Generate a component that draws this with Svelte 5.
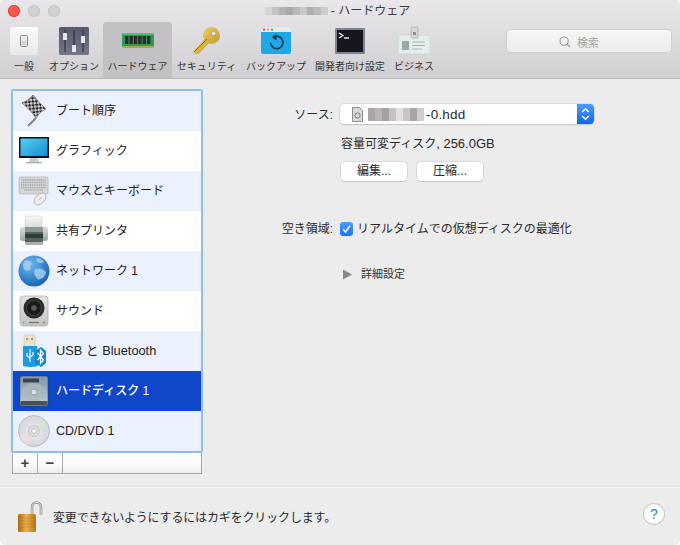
<script>
  // toolbar tabs and device list
  const tabs = [
    { id: "general", label: "一般", w: 42 },
    { id: "options", label: "オプション", w: 58 },
    { id: "hardware", label: "ハードウェア", w: 69, active: true },
    { id: "security", label: "セキュリティ", w: 69 },
    { id: "backup", label: "バックアップ", w: 70 },
    { id: "dev", label: "開発者向け設定", w: 78 },
    { id: "business", label: "ビジネス", w: 50 },
  ];

  const rows = [
    { id: "boot", label: "ブート順序" },
    { id: "display", label: "グラフィック" },
    { id: "keyboard", label: "マウスとキーボード" },
    { id: "printer", label: "共有プリンタ" },
    { id: "network", label: "ネットワーク 1" },
    { id: "sound", label: "サウンド" },
    { id: "usb", label: "USB と Bluetooth" },
    { id: "hdd", label: "ハードディスク 1", selected: true },
    { id: "cd", label: "CD/DVD 1" },
  ];

  const titleBlur = ["#d6d4d6", "#c4c2c4", "#b5b3b5", "#a9a7a9", "#b9b7b9", "#c9c7c9", "#b1afb1", "#bdbbbd", "#cdcbcd"];
  const fileBlur = ["#aaa6aa", "#b8b4b8", "#a4a0a4", "#c4c0c4", "#e2e0e2", "#c8c4c8", "#a8a4a8", "#d0ccd0"];
</script>

{#snippet toolIcon(id)}
  {#if id === "general"}
    <svg width="30" height="30" viewBox="0 0 30 30">
      <rect x="1" y="1" width="28" height="28" rx="1.5" fill="url(#gSwitch)" />
      <rect x="11.5" y="9.5" width="7" height="11" rx="1" fill="#ececec" stroke="#8a8c8f" stroke-width="1" />
      <rect x="12.5" y="15" width="5" height="4.5" fill="#d2d2d2" />
    </svg>
  {:else if id === "options"}
    <svg width="30" height="30" viewBox="0 0 30 30">
      <rect x="0" y="1" width="30" height="28" rx="1.5" fill="url(#gSlate)" />
      <path d="M6 4v22M15 4v22M24 4v22" stroke="#2e3240" stroke-width="1.2" />
      <rect x="4" y="7" width="4" height="7" rx=".6" fill="#e6e6e6" />
      <rect x="13" y="19" width="4" height="7" rx=".6" fill="#e6e6e6" />
      <rect x="22" y="10" width="4" height="7" rx=".6" fill="#e6e6e6" />
    </svg>
  {:else if id === "hardware"}
    <svg width="34" height="30" viewBox="0 0 34 30">
      <rect x="1" y="7" width="32" height="14" fill="#2f9a55" />
      <rect x="1" y="7" width="32" height="2" fill="#4fc078" />
      <path d="M4 10h3.4v8H4zM8.4 10h3.4v8H8.4zM12.8 10h3.4v8h-3.4zM17.2 10h3.4v8h-3.4zM21.6 10h3.4v8h-3.4zM26 10h3.4v8H26z" fill="#2b2b2b" />
      <rect x="2" y="20" width="30" height="2" fill="#b5a244" />
    </svg>
  {:else if id === "security"}
    <svg width="30" height="30" viewBox="0 0 30 30">
      <path d="M1 26 L3 28 L7 27.5 L19 15 L14 11 Z" fill="url(#gKey)" />
      <circle cx="19.5" cy="9.5" r="8.5" fill="url(#gKey)" />
      <circle cx="21.5" cy="7.5" r="2.4" fill="#e7e5e7" stroke="#a98a22" stroke-width=".6" />
      <path d="M2 26 L15 13" stroke="#8c6f18" stroke-width="1" />
    </svg>
  {:else if id === "backup"}
    <svg width="30" height="30" viewBox="0 0 30 30">
      <rect x="0" y="1" width="30" height="27" rx="2" fill="#1ea8e6" />
      <path d="M0 6V3a2 2 0 0 1 2-2h26a2 2 0 0 1 2 2v3z" fill="#e6eaee" />
      <circle cx="3" cy="3.6" r="1.2" fill="#e8483f" />
      <circle cx="7" cy="3.6" r="1.2" fill="#e8a33a" />
      <circle cx="11" cy="3.6" r="1.2" fill="#3fb65a" />
      <path d="M12 11.5 A6.2 6.2 0 1 1 9.6 17" fill="none" stroke="#14384f" stroke-width="1.6" />
      <path d="M15.5 8 L11 11.5 L15.5 14.5 Z" fill="#14384f" />
    </svg>
  {:else if id === "dev"}
    <svg width="30" height="30" viewBox="0 0 30 30">
      <rect x="0" y="2" width="30" height="26" rx="1" fill="#7d8298" />
      <rect x="2" y="4" width="26" height="22" fill="#16171b" />
      <path d="M4 7 L8 9.5 L4 12" fill="none" stroke="#fff" stroke-width="1.3" />
      <path d="M9 12h5" stroke="#fff" stroke-width="1.3" />
    </svg>
  {:else if id === "business"}
    <svg width="32" height="30" viewBox="0 0 32 30">
      <rect x="0" y="9" width="32" height="19" rx="1.5" fill="#e3eeec" stroke="#ccd6d4" />
      <rect x="13" y="1" width="7" height="11" rx="1" fill="#d6d6d6" stroke="#a9a9a9" stroke-width=".7" />
      <rect x="15" y="6" width="3" height="3" fill="#8d8d8d" />
      <rect x="4" y="15" width="7" height="9" fill="#9aa7a8" />
      <path d="M14 16h13M14 19.5h13M14 23h10" stroke="#a4b3b5" stroke-width="1.2" />
    </svg>
  {/if}
{/snippet}

{#snippet rowIcon(id)}
  {#if id === "boot"}
    <svg width="32" height="34" viewBox="0 0 32 34">
      <path d="M18 24 L10 32" stroke="#858585" stroke-width="2.2" />
      <path d="M4 9 Q10 7 15 1 Q20 8 28 15 Q22 17 18 24 Q12 15 4 9Z" fill="url(#pCheck)" stroke="#444" stroke-width=".5" />
    </svg>
  {:else if id === "display"}
    <svg width="32" height="30" viewBox="0 0 32 30">
      <rect x="1" y="1" width="30" height="21" fill="#101418" />
      <rect x="2.5" y="2.5" width="27" height="17.5" fill="url(#gScreen)" />
      <path d="M12 22h8l1 4H11z" fill="#c4d0d4" />
      <rect x="8" y="26" width="16" height="1.4" fill="#a9b0b2" />
    </svg>
  {:else if id === "keyboard"}
    <svg width="32" height="32" viewBox="0 0 32 32">
      <rect x="1" y="2" width="29" height="17" rx="1.5" fill="#d7d7d7" stroke="#a9a9a9" stroke-width=".6" />
      <path d="M3 5h25M3 7.5h25M3 10h25M3 12.5h25M6 15h19" stroke="#a8a8a8" stroke-width="1.4" stroke-dasharray="1.2 .6" />
      <ellipse cx="22" cy="24" rx="4.6" ry="7" transform="rotate(45 22 24)" fill="#eeeeee" stroke="#a4a4a4" stroke-width=".7" />
      <path d="M24 22 L21 25" stroke="#bbb" stroke-width="1" />
    </svg>
  {:else if id === "printer"}
    <svg width="32" height="32" viewBox="0 0 32 32">
      <rect x="7" y="1" width="17" height="13" rx="1.5" fill="url(#gPaper)" stroke="#c8c8c8" stroke-width=".5" />
      <rect x="2" y="12" width="28" height="14" rx="2.5" fill="url(#gPrinter)" />
      <rect x="7" y="12" width="18" height="15" fill="#55615f" />
      <rect x="7" y="12" width="18" height="5" fill="#8e9997" />
      <rect x="7" y="19" width="18" height="4" fill="#333b3a" />
      <rect x="7" y="27" width="18" height="3" rx="1" fill="#aab0b0" />
      <rect x="26" y="22" width="2" height="2" fill="#5fcf6b" />
    </svg>
  {:else if id === "network"}
    <svg width="32" height="32" viewBox="0 0 32 32">
      <circle cx="16" cy="16" r="15.5" fill="url(#gGlobe)" />
      <path d="M6 6 Q12 4 14 8 Q11 12 13 14 Q9 18 6 14 Q4 10 6 6Z M17 14 Q24 12 28 17 Q27 23 22 24 Q20 26 18 22 Q15 18 17 14Z M18 3 Q23 3 26 7 Q22 9 19 7Z" fill="#a9d3f0" opacity=".8" />
    </svg>
  {:else if id === "sound"}
    <svg width="30" height="32" viewBox="0 0 30 32">
      <rect x="1" y="1" width="28" height="30" rx="3.5" fill="url(#gBox)" stroke="#a8a8a8" stroke-width=".7" />
      <circle cx="15" cy="13" r="10.5" fill="#2a2a2a" />
      <circle cx="15" cy="13" r="7.5" fill="#1a1a1a" stroke="#4b4b4b" stroke-width=".8" />
      <circle cx="15" cy="13" r="2.8" fill="#5a5a5a" />
      <path d="M10 27.5h10" stroke="#777" stroke-width="1.3" />
      <circle cx="4.5" cy="27.5" r=".9" fill="#46c060" />
      <circle cx="25" cy="27.5" r="1.2" fill="#999" />
    </svg>
  {:else if id === "usb"}
    <svg width="26" height="34" viewBox="0 0 26 34">
      <rect x="3" y="1" width="11" height="12" rx="1" fill="#ece2c6" stroke="#c7bd9f" stroke-width=".5" />
      <rect x="5" y="4" width="2" height="2" fill="#a39a80" />
      <rect x="10" y="4" width="2" height="2" fill="#a39a80" />
      <path d="M2 12h14l1 20q-7 2-15 0z" fill="#1e9bde" />
      <path d="M9 15v13M6 19v3l3 2M12 18v3l-3 2" fill="none" stroke="#e4f4fc" stroke-width="1.2" />
      <path d="M20 13l5 4v12l-5 4-6-4V17z" fill="#0d85d0" />
      <path d="M16.5 19 L22.5 26 L19.5 29.5 V16 L22.5 19.5 L16.5 26" fill="none" stroke="#fff" stroke-width="1.3" />
    </svg>
  {:else if id === "hdd"}
    <svg width="30" height="32" viewBox="0 0 30 32">
      <rect x="1" y="1" width="28" height="30" rx="2" fill="url(#gHdd)" stroke="#2c3a4a" stroke-width=".5" />
      <rect x="4" y="3.5" width="16" height="4" rx=".5" fill="#3a4450" />
      <ellipse cx="15" cy="17" rx="12" ry="9" fill="#a9bac2" opacity=".75" />
      <circle cx="15" cy="17" r="3" fill="#d8e2e6" stroke="#75838b" stroke-width=".6" />
      <rect x="1.5" y="26" width="27" height="4.5" fill="#4b4f52" />
    </svg>
  {:else if id === "cd"}
    <svg width="32" height="32" viewBox="0 0 32 32">
      <circle cx="16" cy="16" r="15.5" fill="url(#gCd)" stroke="#a5a5a5" stroke-width=".6" />
      <path d="M16 16 L22 2 Q28 6 30 12Z" fill="#cfe8d4" opacity=".8" />
      <path d="M16 16 L9 30 Q4 27 2 21Z" fill="#f3d9e4" opacity=".8" />
      <circle cx="16" cy="16" r="5.5" fill="#dedede" stroke="#b5b5b5" stroke-width=".6" />
      <circle cx="16" cy="16" r="2.4" fill="#f4f4f4" stroke="#a5a5a5" stroke-width=".6" />
    </svg>
  {/if}
{/snippet}

<svg class="defs" width="0" height="0" aria-hidden="true">
  <defs>
    <linearGradient id="gSwitch" x1="0" y1="0" x2="0" y2="1"><stop offset="0" stop-color="#fafafa" /><stop offset="1" stop-color="#e9e9e9" /></linearGradient>
    <linearGradient id="gSlate" x1="0" y1="0" x2="0" y2="1"><stop offset="0" stop-color="#565b6c" /><stop offset="1" stop-color="#737789" /></linearGradient>
    <linearGradient id="gKey" x1="0" y1="0" x2="1" y2="1"><stop offset="0" stop-color="#ecd262" /><stop offset="1" stop-color="#c09a2a" /></linearGradient>
    <linearGradient id="gScreen" x1="0" y1="0" x2="1" y2="1"><stop offset="0" stop-color="#56cdf3" /><stop offset="1" stop-color="#1590d2" /></linearGradient>
    <linearGradient id="gPaper" x1="0" y1="0" x2="0" y2="1"><stop offset="0" stop-color="#f8f8f8" /><stop offset="1" stop-color="#d6d6d6" /></linearGradient>
    <linearGradient id="gBox" x1="0" y1="0" x2="0" y2="1"><stop offset="0" stop-color="#e4e4e4" /><stop offset="1" stop-color="#c4c4c4" /></linearGradient>
    <linearGradient id="gPrinter" x1="0" y1="0" x2="0" y2="1"><stop offset="0" stop-color="#d8dedd" /><stop offset="1" stop-color="#9ea7a6" /></linearGradient>
    <radialGradient id="gGlobe" cx=".38" cy=".3" r=".75"><stop offset="0" stop-color="#6db9ee" /><stop offset="1" stop-color="#1760b4" /></radialGradient>
    <linearGradient id="gHdd" x1="0" y1="0" x2="0" y2="1"><stop offset="0" stop-color="#7f95a6" /><stop offset="1" stop-color="#c2ced4" /></linearGradient>
    <radialGradient id="gCd" cx=".5" cy=".5" r=".5"><stop offset="0" stop-color="#ededed" /><stop offset="1" stop-color="#d4d6e0" /></radialGradient>
    <pattern id="pCheck" width="5" height="5" patternUnits="userSpaceOnUse" patternTransform="rotate(40)">
      <rect width="5" height="5" fill="#d8d8d8" />
      <rect width="2.5" height="2.5" fill="#262626" />
      <rect x="2.5" y="2.5" width="2.5" height="2.5" fill="#262626" />
    </pattern>
  </defs>
</svg>

<div class="window">
  <header class="head">
    <div class="titlebar">
      <div class="lights">
        <span class="light red"></span>
        <span class="light"></span>
        <span class="light"></span>
      </div>
      <div class="title">
        <span class="blur">
          {#each titleBlur as c}<i style="background:{c}"></i>{/each}
        </span>
        <span>- ハードウェア</span>
      </div>
    </div>
    <div class="toolbar">
      <nav class="tabs">
        {#each tabs as t}
          <div class="tab" class:active={t.active} style="width:{t.w}px">
            <div class="tab-icon">{@render toolIcon(t.id)}</div>
            <span>{t.label}</span>
          </div>
        {/each}
      </nav>
      <div class="search">
        <svg width="12" height="12" viewBox="0 0 14 14">
          <circle cx="6" cy="6" r="4.8" fill="none" stroke="#8d8d8d" stroke-width="1.1" />
          <path d="M9.4 9.4 L13 13" stroke="#8d8d8d" stroke-width="1.2" />
        </svg>
        <span>検索</span>
      </div>
    </div>
  </header>

  <main class="body">
    <section class="left">
      <div class="list">
        {#each rows as r, i}
          <div class="row {r.id}" class:alt={i % 2 === 0} class:selected={r.selected}>
            <div class="row-icon">{@render rowIcon(r.id)}</div>
            <span class="row-label">{r.label}</span>
          </div>
        {/each}
      </div>
      <div class="listbar">
        <button>+</button>
        <button>−</button>
      </div>
    </section>

    <section class="form">
      <div class="label src">ソース:</div>
      <div class="select">
        <svg class="file" width="11" height="15" viewBox="0 0 11 15">
          <path d="M.5.5h7l3 3v11H.5z" fill="#d8d8d8" stroke="#8b8b8b" />
          <circle cx="5.5" cy="8.5" r="2.6" fill="none" stroke="#7b7b7b" />
        </svg>
        <span class="blur file-blur">
          {#each fileBlur as c}<i style="background:{c}"></i>{/each}
        </span>
        <span class="fname">-0.hdd</span>
        <span class="stepper">
          <svg width="9" height="14" viewBox="0 0 9 14">
            <path d="M1.2 5 L4.5 1.8 L7.8 5M1.2 9 L4.5 12.2 L7.8 9" fill="none" stroke="#fff" stroke-width="1.5" />
          </svg>
        </span>
      </div>

      <div class="info">容量可変ディスク<span class="latin">, 256.0GB</span></div>
      <div class="buttons">
        <button>編集...</button>
        <button>圧縮...</button>
      </div>

      <div class="label free">空き領域:</div>
      <label class="check">
        <span class="box">
          <svg width="14" height="14" viewBox="0 0 14 14">
            <path d="M3.4 7.4 L6 10.2 L10.6 3.6" fill="none" stroke="#fff" stroke-width="1.7" />
          </svg>
        </span>
        <span>リアルタイムでの仮想ディスクの最適化</span>
      </label>

      <div class="advanced">
        <svg width="9" height="11" viewBox="0 0 9 11"><path d="M0 .5 L9 5.5 L0 10.5Z" fill="#8a8a8a" /></svg>
        <span>詳細設定</span>
      </div>
    </section>
  </main>

  <footer class="foot">
    <svg class="lock" width="26" height="32" viewBox="0 0 26 32">
      <path d="M15 15V6a4.5 4.5 0 0 1 9 0v8" fill="none" stroke="#8f8f8f" stroke-width="2.6" />
      <path d="M15 15V6a4.5 4.5 0 0 1 9 0v8" fill="none" stroke="#e8e8e8" stroke-width="1" />
      <rect x="1" y="13" width="18" height="18" rx="1.5" fill="url(#gLock)" />
      <path d="M1 17h18M1 20h18M1 23h18M1 26h18" stroke="#a96d15" stroke-width=".6" opacity=".6" />
      <defs>
        <linearGradient id="gLock" x1="0" y1="0" x2="1" y2="0">
          <stop offset="0" stop-color="#a86a16" /><stop offset=".45" stop-color="#eeb04a" /><stop offset="1" stop-color="#b5771e" />
        </linearGradient>
      </defs>
    </svg>
    <span class="lock-text">変更できないようにするにはカギをクリックします。</span>
    <button class="help">?</button>
  </footer>
</div>

<style>
  :global(body) { margin: 0; background: #fff; }
  .defs { position: absolute; }
  .window {
    width: 680px; height: 545px; background: #ececec; border-radius: 5px;
    overflow: hidden; display: flex; flex-direction: column;
    font-family: "Liberation Sans", "Noto Sans CJK JP", sans-serif; color: #2a2a2a;
  }
  .blur { display: inline-flex; }
  .blur i { display: block; width: 7px; height: 100%; }

  /* header */
  .head { height: 79px; box-sizing: border-box; background: linear-gradient(#e9e7e9, #d1cfd1); border-bottom: 1px solid #b8b8b8; flex: none; }
  .titlebar { height: 22px; display: flex; align-items: center; justify-content: center; position: relative; }
  .lights { position: absolute; left: 8px; top: 5px; display: flex; gap: 8px; }
  .light { width: 12px; height: 12px; border-radius: 50%; background: #d2d0d2; box-shadow: inset 0 0 0 1px #c4c2c4; }
  .light.red { background: #fc5753; box-shadow: inset 0 0 0 1px #e8453f; }
  .title { display: flex; align-items: center; gap: 3px; font-size: 12px; color: #3c3c3c; line-height: 16px; margin-right: 5px; }
  .title .blur { height: 8px; }
  .toolbar { display: flex; justify-content: space-between; height: 56px; padding: 0 9px 0 3px; }
  .tabs { display: flex; }
  .tab { display: flex; flex-direction: column; align-items: center; font-size: 10px; color: #333; white-space: nowrap; border-radius: 4px 4px 0 0; padding-top: 4px; box-sizing: border-box; }
  .tab.active { background: #c3c1c3; }
  .tab-icon { height: 30px; display: flex; align-items: center; justify-content: center; margin-bottom: 2px; }
  .search { width: 164px; height: 22px; margin-top: 8px; box-sizing: border-box; padding: 1px 20px 0 0; border-radius: 4px; background: linear-gradient(#f6f5f6, #eeedee); box-shadow: 0 0 0 1px #d0ced0; display: flex; align-items: center; justify-content: center; gap: 6px; font-size: 11px; color: #a5a5a5; }

  /* main */
  .body { flex: 1; display: flex; min-height: 0; }
  .left { width: 204px; padding: 10px 0 0 11px; box-sizing: border-box; flex: none; }
  .list { width: 192px; box-sizing: border-box; border: 2px solid #90bdec; border-radius: 2px; background: #fff; }
  .row { height: 40px; display: flex; align-items: center; font-size: 12px; color: #222; background: #fff; }
  .row.alt { background: #ebf1fc; }
  .row.selected { background: #0e47c9; color: #fff; font-weight: 500; }
  .row.usb { font-size: 12.8px; }
  .row.cd { font-size: 12.5px; }
  .row-label { line-height: 16px; }
  .row-icon { width: 38px; margin-left: 2px; margin-right: 3px; display: flex; justify-content: center; align-items: center; flex: none; }
  .listbar { width: 190px; height: 21px; margin-left: 1px; box-sizing: border-box; border: 1px solid #a9a9a9; border-top: 0; background: linear-gradient(#fff 45%, #ececec); display: flex; }
  .listbar button { width: 25px; border: 0; border-right: 1px solid #a9a9a9; background: none; padding: 0; font: bold 15px/18px "Liberation Sans", sans-serif; color: #444; }

  /* settings form */
  .form { flex: 1; display: grid; grid-template-columns: 129px 1fr; column-gap: 7px; align-content: start; padding-top: 25px; font-size: 12px; }
  .label { text-align: right; font-size: 12px; color: #2a2a2a; }
  .src { line-height: 20px; padding-top: 1px; height: 19px; }
  .select { width: 254px; height: 20px; box-sizing: border-box; background: #fff; border-radius: 4px; box-shadow: 0 0 0 .5px #c8c8c8, 0 1px 1px #c4c4c4; display: flex; align-items: center; position: relative; padding-left: 12px; font-size: 13.5px; }
  .file-blur { height: 13px; margin-left: 5px; }
  .file-blur i { width: 7px; }
  .fname { margin-left: 2px; letter-spacing: .2px; }
  .file { flex: none; }
  .stepper { position: absolute; right: 0; top: 0; width: 17px; height: 20px; border-radius: 0 4px 4px 0; background: linear-gradient(#4d9bfb, #1166ec); display: flex; align-items: center; justify-content: center; }
  .info { grid-column: 2; margin-top: 11px; line-height: 17px; margin-left: 1px; }
  .latin { font-size: 13px; }
  .buttons { grid-column: 2; margin: 9px 0 0 1px; display: flex; gap: 10px; }
  .buttons button { width: 66px; height: 19px; padding: 0; border: 0; border-radius: 4px; background: #fff; box-shadow: 0 0 0 .5px #c8c8c8, 0 1px 1px #bdbdbd; font: 12px/19px "Liberation Sans", "Noto Sans CJK JP", sans-serif; color: #2a2a2a; }
  .free { margin-top: 41px; line-height: 14px; }
  .check { margin-top: 41px; display: flex; align-items: center; gap: 4px; line-height: 14px; }
  .box { width: 13px; height: 14px; border-radius: 3px; background: linear-gradient(#4d9bfb, #1f74ee); display: flex; align-items: center; justify-content: center; }
  .advanced { grid-column: 2; margin: 30px 0 0 3px; display: flex; align-items: center; gap: 9px; font-size: 11px; line-height: 16px; color: #333; }

  /* footer */
  .foot { height: 58px; flex: none; box-sizing: border-box; border-top: 1px solid #f7f7f7; box-shadow: 0 -1px 0 #dcdcdc; display: flex; align-items: center; padding: 0 16px 0 17px; font-size: 12px; }
  .lock { flex: none; margin-right: 10px; }
  .lock-text { flex: 1; letter-spacing: -.15px; }
  .help { width: 20px; height: 20px; padding: 0; border: 0; border-radius: 50%; background: #fff; box-shadow: 0 0 0 1px #c9c9c9; color: #2a7df0; font: 14px/20px "Liberation Sans", sans-serif; margin-top: -6px; }
</style>
